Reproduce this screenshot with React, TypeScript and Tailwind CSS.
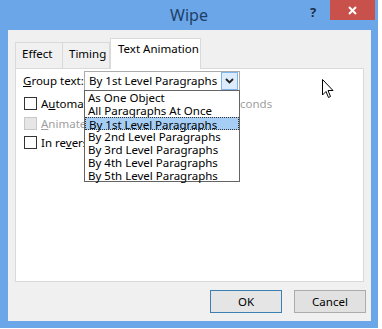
import React from 'react'

const items = [
  'As One Object',
  'All Paragraphs At Once',
  'By 1st Level Paragraphs',
  'By 2nd Level Paragraphs',
  'By 3rd Level Paragraphs',
  'By 4th Level Paragraphs',
  'By 5th Level Paragraphs',
]

function Check({ disabled }: { disabled?: boolean }) {
  return (
    <span
      className={
        'inline-block shrink-0 w-[13px] h-[13px] border ' +
        (disabled ? 'border-[#c8c8c8] bg-[#e6e6e6]' : 'border-[#333] bg-white')
      }
    />
  )
}

export default function App() {
  return (
    <div
      className="w-[382px] h-[329px] bg-white overflow-hidden text-[11.5px] text-black whitespace-nowrap"
      style={{ fontFamily: '"Noto Sans", "Liberation Sans", sans-serif' }}
    >
      <div className="w-[378px] h-[328px] bg-[#6ba6e9] flex flex-col">
        {/* title bar */}
        <div className="h-[30px] relative flex items-center justify-center">
          <span className="text-[16px] text-[#1e3f66] -mt-[1px]">Wipe</span>
          <span className="absolute left-[310px] top-[3px] text-[13px] font-bold text-[#1e2f45]">?</span>
          <div className="absolute left-[330px] top-0 w-[45px] h-[20px] bg-[#c9514c] flex items-center justify-center">
            <svg width="9" height="9" viewBox="0 0 9 9">
              <path d="M1 1 L8 8 M8 1 L1 8" stroke="white" strokeWidth="2" />
            </svg>
          </div>
        </div>

        {/* client */}
        <div className="flex-1 ml-[8px] mr-[7px] mb-[7px] bg-[#f0f0f0] flex flex-col px-[7px] pt-[8px]">
          {/* tabs */}
          <div className="flex items-end h-[30px] relative z-10">
            <div className="w-[48px] h-[26px] border border-b-0 border-[#d9d9d9] bg-[#f0f0f0] pl-[6px] pt-[2px]">Effect</div>
            <div className="w-[47px] h-[26px] border border-l-0 border-b-0 border-[#d9d9d9] bg-[#f0f0f0] pl-[6px] pt-[2px]">Timing</div>
            <div className="w-[91px] h-[31px] -mb-[1px] border border-b-0 border-[#d9d9d9] bg-white pl-[7px] pt-[1px]">
              Text Animation
            </div>
          </div>

          {/* panel */}
          <div className="h-[214px] w-[349px] border border-[#d9d9d9] bg-white relative">
            <div className="flex items-center h-[21px] mt-[1px]">
              <span className="ml-[7px] w-[61px]">
                <span className="underline">G</span>roup text:
              </span>
              <div className="w-[156px] h-[20px] border border-[#acacac] flex items-center relative">
                <span className="ml-[4px]">By 1st Level Paragraphs</span>
                <div className="absolute right-[1px] top-[0px] w-[17px] h-[18px] bg-[#dcecfc] border border-[#7eb4ea] flex items-center justify-center">
                  <svg width="9" height="6" viewBox="0 0 9 6">
                    <path d="M1 1 L4.5 4.5 L8 1" stroke="#222" strokeWidth="1.8" fill="none" />
                  </svg>
                </div>
              </div>
            </div>

            <div className="flex flex-col mt-[6px] ml-[8px] gap-[6px]">
              <div className="flex items-center h-[13px] gap-[4px]">
                <Check />
                <span className="w-[183px]">
                  A<span className="underline">u</span>tomatically after
                </span>
                <span className="text-[#a0a0a0]">seconds</span>
              </div>
              <div className="flex items-center h-[13px] gap-[4px] mt-[1px]">
                <Check disabled />
                <span className="text-[#a0a0a0]">
                  <span className="underline">A</span>nimate attached shape
                </span>
              </div>
              <div className="flex items-center h-[13px] gap-[4px]">
                <Check />
                <span>
                  In re<span className="underline">v</span>erse order
                </span>
              </div>
            </div>

            {/* open dropdown list */}
            <div className="absolute left-[68px] top-[21px] w-[156px] h-[92px] bg-white border border-[#646464] flex flex-col z-20">
              {items.map((t, i) => (
                <div
                  key={t}
                  className={
                    'h-[13px] leading-[13px] px-[3px] ' +
                    (i === 2 ? 'bg-[#a6cef5] border border-dotted border-[#333] leading-[11px] px-[2px]' : '')
                  }
                >
                  {t}
                </div>
              ))}
            </div>

            {/* mouse cursor */}
            <svg className="absolute left-[306px] top-[10px]" width="13" height="20" viewBox="0 0 13 20">
              <path d="M0.5 0.5 L0.5 16 L4 12.5 L6.5 18.5 L8.5 17.5 L6 11.5 L11 11.5 Z" fill="white" stroke="black" strokeWidth="1" />
            </svg>
          </div>

          {/* buttons */}
          <div className="flex-1 flex items-center justify-end gap-[12px] -mr-[2px]">
            <button className="w-[72px] h-[23px] border border-[#3c7fb1] bg-[#e5e5e5]">OK</button>
            <button className="w-[72px] h-[23px] border border-[#acacac] bg-[#e1e1e1]">Cancel</button>
          </div>
        </div>
      </div>
    </div>
  )
}
